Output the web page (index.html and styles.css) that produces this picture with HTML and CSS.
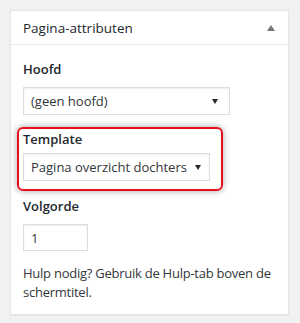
FILE: index.html
```html
<!DOCTYPE html>
<html lang="nl">
<head>
    <meta charset="UTF-8">
    <title>Pagina-attributen</title>
    <link rel="stylesheet" href="styles.css">
</head>
<body>
    <!-- Meta box -->
    <div class="postbox">
        <div class="postbox-header">
            <h2>Pagina-attributen</h2>
            <svg class="toggle" width="8" height="6" viewBox="0 0 8 6"><path d="M4 0 L8 6 L0 6 Z" fill="#72777c"/></svg>
        </div>
        <div class="inside">
            <p class="field-label">Hoofd</p>
            <div class="select wide">
                <span>(geen hoofd)</span>
                <svg width="6" height="5" viewBox="0 0 6 5"><path d="M0 0 L6 0 L3 5 Z" fill="#23282d"/></svg>
            </div>

            <!-- highlighted field -->
            <div class="highlight">
                <p class="field-label">Template</p>
                <div class="select">
                    <span>Pagina overzicht dochters</span>
                    <svg width="6" height="5" viewBox="0 0 6 5"><path d="M0 0 L6 0 L3 5 Z" fill="#23282d"/></svg>
                </div>
            </div>

            <p class="field-label">Volgorde</p>
            <input class="order" type="text" value="1">

            <p class="help">Hulp nodig? Gebruik de Hulp-tab boven de schermtitel.</p>
        </div>
    </div>
</body>
</html>
```

FILE: styles.css
```css
/* Reset */
* {
    margin: 0;
    padding: 0;
    box-sizing: border-box;
}

body {
    background-color: #f1f1f1;
    font-family: 'Open Sans', sans-serif;
    font-size: 13px;
    color: #23282d;
    padding: 10px 11px 8px 10px;
}

/* Meta box */
.postbox {
    background: #ffffff;
    border: 1px solid #e5e5e5;
    box-shadow: 0 1px 1px rgba(0, 0, 0, 0.04);
}

.postbox-header {
    display: flex;
    align-items: center;
    justify-content: space-between;
    height: 34px;
    padding: 0 12px;
    border-bottom: 1px solid #eeeeee;
}

.postbox-header h2 {
    font-size: 13.5px;
    font-weight: 400;
    color: #23282d;
}

.toggle {
    margin-right: 1px;
    margin-top: 1px;
}

.inside {
    padding: 14px 12px 12px 12px;
}

.field-label {
    font-weight: 600;
    line-height: 20px;
    margin-bottom: 8px;
}

/* Fake select */
.select {
    display: flex;
    align-items: center;
    justify-content: space-between;
    width: 187px;
    height: 28px;
    padding: 0 8px 0 7px;
    border: 1px solid #dddddd;
    box-shadow: inset 0 1px 2px rgba(0, 0, 0, 0.07);
    font-size: 13px;
    color: #32373c;
    margin-bottom: 13px;
}

.select.wide {
    width: 207px;
    padding-right: 11px;
}

.highlight {
    width: fit-content;
    margin: -1px 0 5px -6px;
    padding: 0 11px 8px 4px;
    border: 2px solid #e8101a;
    border-radius: 6px;
    box-shadow: 0 0 7px rgba(0, 0, 0, 0.35);
}

.highlight .field-label {
    margin-bottom: 4px;
}

.highlight .select {
    margin-bottom: 0;
}

.order {
    display: block;
    width: 65px;
    height: 27px;
    padding: 0 7px;
    border: 1px solid #dddddd;
    box-shadow: inset 0 1px 2px rgba(0, 0, 0, 0.07);
    font-family: 'Open Sans', sans-serif;
    font-size: 13px;
    color: #32373c;
    margin-bottom: 13px;
}

.help {
    line-height: 19px;
    letter-spacing: -0.25px;
    color: #32373c;
}
```
